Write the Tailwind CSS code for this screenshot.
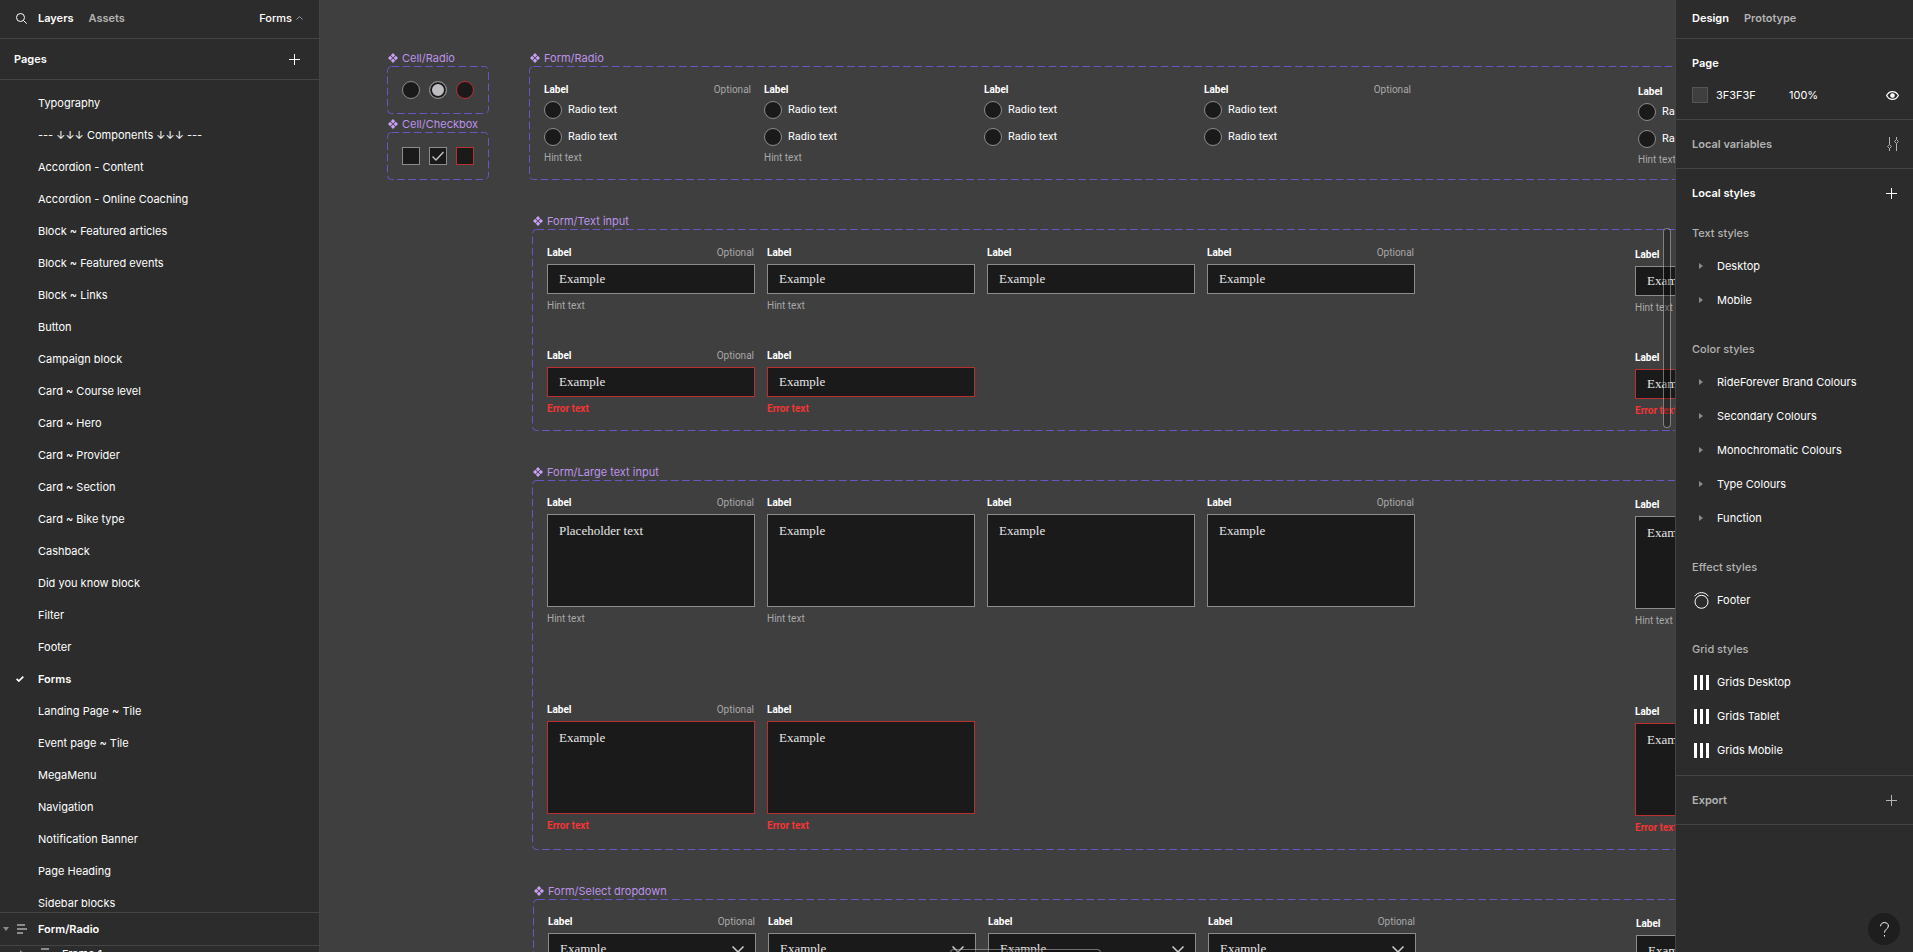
<!DOCTYPE html>
<html lang="en">
<head>
    <meta charset="UTF-8">
    <meta name="viewport" content="width=device-width, initial-scale=1.0">
    <title>Forms</title>
    <script src="https://cdn.jsdelivr.net/npm/@tailwindcss/browser@4"></script>
</head>
<body class="flex h-screen overflow-hidden bg-[#3f3f3f] font-['Inter',sans-serif] text-[11px] leading-4 text-white">

    <!-- Left panel -->
    <aside class="flex w-80 shrink-0 flex-col border-r border-[#444] bg-[#2c2c2c]">
        <header class="flex h-[39px] shrink-0 items-center border-b border-[#444] px-4 pb-[2px]">
            <button aria-label="Search" class="mr-[11px]">
                <svg class="size-[11px]" viewBox="0 0 11 11" fill="none" stroke="#fff"><circle cx="4.5" cy="4.5" r="4"/><path d="M7.4 7.4l3.3 3.3"/></svg>
            </button>
            <button class="font-semibold">Layers</button>
            <button class="ml-[15px] font-semibold text-[#b3b3b3]">Assets</button>
            <button class="ml-auto flex items-center gap-1 font-medium">Forms
                <svg class="h-1 w-[7px]" viewBox="0 0 7 4" fill="none" stroke="#999"><path d="M.5 3.5l3-3 3 3"/></svg>
            </button>
        </header>
        <div class="flex h-[41px] shrink-0 items-center justify-between border-b border-[#444] pr-[19px] pl-[14px]">
            <h2 class="font-semibold">Pages</h2>
            <button aria-label="Add page">
                <svg class="size-[11px]" viewBox="0 0 11 11" stroke="#fff"><path d="M5.5 0v11M0 5.5h11"/></svg>
            </button>
        </div>
        <ul id="pages" class="min-h-0 flex-1 overflow-hidden pt-[7px]"></ul>
        <div class="flex h-[34px] shrink-0 items-center border-y border-[#444] pl-[3px] font-semibold">
            <svg class="mr-2 h-1 w-[6px]" viewBox="0 0 6 4" fill="#8c8c8c"><path d="M0 0h6L3 4z"/></svg>
            <svg class="mr-[11px] h-[10px] w-[10px]" viewBox="0 0 10 10" fill="#8c8c8c"><path d="M0 0h8v2H0zM0 4h10v2H0zM0 8h6v2H0z"/></svg>
            Form/Radio
        </div>
        <div class="flex h-[6px] shrink-0 items-start overflow-hidden pl-5">
            <svg class="mt-1 mr-[17px] h-[6px] w-1" viewBox="0 0 4 6" fill="#8c8c8c"><path d="M0 0l4 3-4 3z"/></svg>
            <svg class="mt-[2px] mr-[13px] h-[10px] w-2" viewBox="0 0 8 10" fill="#8c8c8c"><path d="M0 0h8v2H0zM0 4h8v2H0z"/></svg>
            <span>Frame 1</span>
        </div>
    </aside>

    <!-- Canvas -->
    <main id="canvas" class="relative min-w-0 flex-1 overflow-hidden bg-[#3f3f3f] font-[Roboto,sans-serif] text-[10px] leading-3">
        <!-- Scrollbars -->
        <div class="absolute top-[228px] right-1 z-10 h-[200px] w-2 rounded-full border border-white/40 bg-black/30"></div>
        <div class="absolute top-[949px] left-[630px] z-10 h-2 w-[151px] rounded-full border border-white/40 bg-black/30"></div>
    </main>

    <!-- Right panel -->
    <aside class="w-[238px] shrink-0 border-l border-[#444] bg-[#2c2c2c]">
        <header class="flex h-[39px] items-center gap-[15px] border-b border-[#444] px-4 pb-[2px] font-semibold">
            <button>Design</button>
            <button class="text-[#b3b3b3]">Prototype</button>
        </header>
        <section class="border-b border-[#444] pr-[14px] pb-4 pl-4">
            <h2 class="flex h-12 items-center font-semibold">Page</h2>
            <div class="flex h-4 items-center">
                <button aria-label="Page color" class="mr-2 size-4 border border-[#555] bg-[#3f3f3f]"></button>
                <input aria-label="Hex" class="w-[73px] bg-transparent p-0 outline-none" value="3F3F3F">
                <input aria-label="Opacity" class="w-12 bg-transparent p-0 outline-none" value="100%">
                <button aria-label="Hide background" class="ml-auto">
                    <svg class="h-[9px] w-[13px]" viewBox="0 0 13 9" fill="none" stroke="#fff" stroke-width="1.2"><path d="M.6 4.5C1.9 2 4 .6 6.5.6s4.6 1.4 5.9 3.9C11.1 7 9 8.4 6.5 8.4S1.9 7 .6 4.5z"/><circle cx="6.5" cy="4.5" r="1.7" fill="#fff"/></svg>
                </button>
            </div>
        </section>
        <section class="flex h-[49px] items-center justify-between border-b border-[#444] pr-[14px] pl-4 font-semibold text-[#b3b3b3]">
            <h2>Local variables</h2>
            <button aria-label="Open variables">
                <svg class="h-[14px] w-3" viewBox="0 0 12 14" fill="none" stroke="#b3b3b3"><path d="M2.5 0v7.500M2.5 11.5V14M9.5 0v2.500M9.5 6.5V14M2.5 7.5l2 2-2 2-2-2zM9.5 2.5l2 2-2 2-2-2z"/></svg>
            </button>
        </section>
        <section class="border-b border-[#444] pb-2">
            <div class="flex h-12 items-center justify-between px-4 font-semibold">
                <h2>Local styles</h2>
                <button aria-label="Add style">
                    <svg class="size-[11px]" viewBox="0 0 11 11" stroke="#fff"><path d="M5.5 0v11M0 5.5h11"/></svg>
                </button>
            </div>
            <div id="styles" class="flex flex-col gap-4 px-4"></div>
        </section>
        <section class="flex h-[49px] items-center justify-between border-b border-[#444] px-4 font-semibold text-[#b3b3b3]">
            <h2>Export</h2>
            <button aria-label="Add export">
                <svg class="size-[11px]" viewBox="0 0 11 11" stroke="#b3b3b3"><path d="M5.5 0v11M0 5.5h11"/></svg>
            </button>
        </section>
        <button aria-label="Help" class="fixed right-[13px] bottom-[7px] flex size-8 items-center justify-center rounded-full bg-[#1e1e1e]">
            <svg class="h-[15px] w-[9px]" viewBox="0 0 9 15" fill="none" stroke="#fff"><path d="M.6 4.2C.6 2 2.2.6 4.5.6s3.9 1.4 3.9 3.4c0 3-3.9 3.2-3.9 6.5M4.5 13v1.5"/></svg>
        </button>
    </aside>

    <script>
        const pages = ['Typography', '--- ↓↓↓ Components ↓↓↓ ---', 'Accordion - Content', 'Accordion - Online Coaching',
            'Block ~ Featured articles', 'Block ~ Featured events', 'Block ~ Links', 'Button', 'Campaign block',
            'Card ~ Course level', 'Card ~ Hero', 'Card ~ Provider', 'Card ~ Section', 'Card ~ Bike type', 'Cashback',
            'Did you know block', 'Filter', 'Footer', 'Forms', 'Landing Page ~ Tile', 'Event page ~ Tile', 'MegaMenu',
            'Navigation', 'Notification Banner', 'Page Heading', 'Sidebar blocks'];
        const check = '<svg class="h-[6px] w-2" viewBox="0 0 8 6" fill="none" stroke="#fff" stroke-width="1.7"><path d="M.6 2.8l2.2 2.2L7.3.6"/></svg>';

        document.getElementById('pages').innerHTML = pages.map(name => `
            <li class="flex h-8 items-center ${name === 'Forms' ? 'font-semibold' : ''}">
                <span class="w-[38px] shrink-0 pl-4">${name === 'Forms' ? check : ''}</span>
                <a href="#">${name}</a>
            </li>`).join('');

        // Local styles list
        const icons = {
            folder: '<svg class="ml-[7px] h-[6px] w-1" viewBox="0 0 4 6" fill="#8c8c8c"><path d="M0 0l4 3-4 3z"/></svg>',
            effect: '<svg class="ml-[2px] h-[17px] w-[15px]" viewBox="0 0 15 17" fill="none" stroke="#fff"><circle cx="7.5" cy="9.8" r="6.5"/><path d="M.7 4.2C2.2 1.9 4.700.6 7.5.6s5.3 1.3 6.8 3.6"/></svg>',
            grid: '<svg class="ml-[2px] size-[15px]" viewBox="0 0 15 15" fill="#fff"><path d="M0 0h3v15H0zM6 0h3v15H6zM12 0h3v15h-3z"/></svg>'
        };
        const styles = [
            ['Text styles', 'folder', ['Desktop', 'Mobile']],
            ['Color styles', 'folder', ['RideForever Brand Colours', 'Secondary Colours', 'Monochromatic Colours', 'Type Colours', 'Function']],
            ['Effect styles', 'effect', ['Footer']],
            ['Grid styles', 'grid', ['Grids Desktop', 'Grids Tablet', 'Grids Mobile']]
        ];
        document.getElementById('styles').innerHTML = styles.map(([title, icon, items]) => `
            <div>
                <h3 class="flex h-8 items-center font-medium text-[#b3b3b3]">${title}</h3>
                ${items.map(item => `<button class="flex h-[34px] w-full items-center"><span class="w-[25px] shrink-0">${icons[icon]}</span>${item}</button>`).join('')}
            </div>`).join('');

        // Component sets on the canvas
        let nextId = 0;
        const circle = 'size-[18px] shrink-0 appearance-none rounded-full border bg-[#1a1a1a]';
        const square = 'size-[18px] shrink-0 appearance-none border bg-[#1a1a1a]';
        const control = 'block w-full appearance-none rounded-none border bg-[#1a1a1a] px-[11px] font-[Liberation_Serif,serif] text-[13px] leading-5 text-[#e6e6e6] outline-none';

        function head(v, id) {
            return `<div class="mb-[5px] flex justify-between pr-px"><label for="${id}" class="font-bold">Label</label>${v.optional ? '<span class="text-[#a8a8a8]">Optional</span>' : ''}</div>`;
        }

        function foot(v) {
            if (v.error) return '<p class="mt-[6px] font-bold text-[#f23535]">Error text</p>';
            return v.hint ? '<p class="mt-[6px] text-[#a8a8a8]">Hint text</p>' : '';
        }

        function field(type, v) {
            const id = 'field' + nextId++;
            const edge = v.error ? 'border-[#b83030]' : 'border-[#8c8c8c]';
            let body = '';
            if (type === 'radio') {
                body = `<div class="flex flex-col gap-[9px] text-[11px]">
                    <label class="flex items-center gap-[6px]"><input type="radio" id="${id}" name="${id}" class="${circle} ${edge}">Radio text</label>
                    <label class="flex items-center gap-[6px]"><input type="radio" name="${id}" class="${circle} ${edge}">Radio text</label>
                </div>`;
            } else if (type === 'text') {
                body = `<input type="text" id="${id}" value="Example" class="${control} ${edge} h-[30px]">`;
            } else if (type === 'textarea') {
                body = `<textarea id="${id}" class="${control} ${edge} h-[93px] resize-none pt-[6px]">${v.text || 'Example'}</textarea>`;
            } else {
                body = `<div class="relative"><select id="${id}" class="${control} ${edge} h-8"><option>Example</option></select>
                    <svg class="pointer-events-none absolute top-[13px] right-3 h-[7px] w-3" viewBox="0 0 12 7" fill="none" stroke="#d0d0d0" stroke-width="1.5"><path d="M.5.5L6 6 11.5.5"/></svg></div>`;
            }
            return `<div class="w-52">${head(v, id)}${body}${foot(v)}</div>`;
        }

        function frame(title, place, content) {
            return `<section class="absolute ${place} flex flex-col">
                <h3 class="flex h-4 shrink-0 items-center gap-1 pl-px font-['Inter',sans-serif] text-[11px] text-[#bd93e8]">
                    <svg class="size-[10px]" viewBox="0 0 10 10" fill="#c9a0f5"><path d="M5 0l2.2 2.2L5 4.4 2.8 2.2zM5 5.6l2.2 2.2L5 10 2.8 7.8zM2.2 2.8L4.4 5 2.2 7.2 0 5zM7.8 2.8L10 5 7.8 7.2 5.6 5z"/></svg>${title}
                </h3>
                <div class="relative flex-1 pl-[15px]">
                    <svg class="pointer-events-none absolute inset-0 h-full w-full overflow-visible" fill="none" stroke="#6b55c4" stroke-dasharray="7.7 3.5"><rect x=".5" y=".5" width="100%" height="100%" rx="4"/></svg>
                    ${content}
                </div>
            </section>`;
        }

        // Desktop variants on the left, mobile variants further right
        function variants(type, rows, gap, far) {
            return `<div class="flex">
                <div class="flex flex-col ${gap}">${rows.map(row => `<div class="flex gap-3">${row.map(v => field(type, v)).join('')}</div>`).join('')}</div>
                <div class="${far} flex flex-col pt-[2px] ${gap}">${rows.map(row => field(type, { hint: true, error: row[0].error })).join('')}</div>
            </div>`;
        }

        const plain = [{ optional: true, hint: true }, { hint: true }, {}, { optional: true }];
        const large = [{ optional: true, hint: true, text: 'Placeholder text' }, { hint: true }, {}, { optional: true }];
        const errors = [{ optional: true, error: true }, { error: true }];

        document.getElementById('canvas').insertAdjacentHTML('beforeend',
            frame('Cell/Radio', 'top-[50px] left-[67px] h-[63px] w-[101px]', `
                <div class="flex gap-[9px] pt-[15px]">
                    <input type="radio" aria-label="Default" class="${circle} border-[#8c8c8c]">
                    <input type="radio" aria-label="Selected" checked class="${circle} border-[#8c8c8c] shadow-[inset_0_0_0_2px_#1a1a1a] checked:bg-[#bdbdc2]">
                    <input type="radio" aria-label="Error" class="${circle} border-[#b83030]">
                </div>`) +
            frame('Cell/Checkbox', 'top-[116px] left-[67px] h-[63px] w-[101px]', `
                <div class="flex gap-[9px] pt-[15px]">
                    <input type="checkbox" aria-label="Default" class="${square} border-[#8c8c8c]">
                    <span class="relative flex">
                        <input type="checkbox" aria-label="Checked" checked class="${square} border-[#8c8c8c]">
                        <svg class="pointer-events-none absolute inset-0 size-[18px]" viewBox="0 0 18 18" fill="none" stroke="#c8c8cc" stroke-width="1.3"><path d="M3.5 9.5l3.5 3.5 7.5-8"/></svg>
                    </span>
                    <input type="checkbox" aria-label="Error" class="${square} border-[#b83030]">
                </div>`) +
            frame('Form/Radio', 'top-[50px] left-[209px] h-[129px] w-[1340px]', `<div class="pt-[18px]">${variants('radio', [plain], 'gap-0', 'ml-[226px]')}</div>`) +
            frame('Form/Text input', 'top-[213px] left-[212px] h-[217px] w-[1340px]', `<div class="pt-[18px]">${variants('text', [plain, errors], 'gap-[38px]', 'ml-[220px]')}</div>`) +
            frame('Form/Large text input', 'top-[464px] left-[212px] h-[385px] w-[1340px]', `<div class="pt-[17px]">${variants('textarea', [large, errors], 'gap-[79px]', 'ml-[220px]')}</div>`) +
            frame('Form/Select dropdown', 'top-[883px] left-[213px] h-[217px] w-[1340px]', `<div class="pt-[17px]">${variants('select', [plain], 'gap-0', 'ml-[220px]')}</div>`));
    </script>
</body>
</html>
